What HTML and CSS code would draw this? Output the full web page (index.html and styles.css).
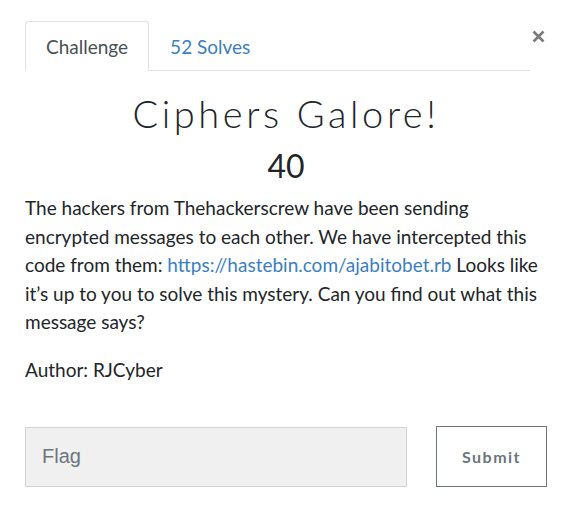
FILE: index.html
```html
<!DOCTYPE html>
<html>
<head>
<meta charset="utf-8">
<link rel="stylesheet" href="styles.css">
</head>
<body>
<div class="modal">
  <div class="header">
    <nav class="tabs">
      <a class="tab active">Challenge</a>
      <a class="tab">52 Solves</a>
    </nav>
    <button class="close" aria-label="Close">
      <svg width="13" height="13" viewBox="0 0 13 13"><path d="M1.5 1.5L11.5 11.5M11.5 1.5L1.5 11.5" stroke="#7a7a7a" stroke-width="2.6" stroke-linecap="butt"/></svg>
    </button>
  </div>
  <h2 class="title">Ciphers Galore!</h2>
  <h3 class="value">40</h3>
  <p class="desc">The hackers from Thehackerscrew have been sending encrypted messages to each other. We have intercepted this code from them: <a href="#">https://hastebin.com/ajabitobet.rb</a> Looks like it’s up to you to solve this mystery. Can you find out what this message says?</p>
  <p class="author">Author: RJCyber</p>
  <form class="submit-row">
    <input class="flag" type="text" placeholder="Flag">
    <button class="submit" type="button">Submit</button>
  </form>
</div>
</body>
</html>
```

FILE: styles.css
```css
html, body {
  margin: 0;
  padding: 0;
  background: #fff;
}
body {
  font-family: "Lato", "Liberation Sans", sans-serif;
  color: #212529;
}
.modal {
  padding: 21px 23px 0 25px;
}
.header {
  display: flex;
  align-items: flex-start;
}
.tabs {
  display: flex;
  flex: 1;
  margin-right: 2px;
  border-bottom: 1px solid #dee2e6;
}
.tab {
  display: flex;
  align-items: center;
  height: 48px;
  padding: 0 20px;
  border: 1px solid transparent;
  border-top-left-radius: 4px;
  border-top-right-radius: 4px;
  margin-bottom: -1px;
  font-size: 19px;
  color: #3a7fc1;
}
.tab.active {
  color: #495057;
  border-color: #dee2e6 #dee2e6 #fff;
  background: #fff;
}
.close {
  margin: 9px 2px 0 0;
  padding: 0;
  border: 0;
  background: none;
  width: 13px;
  height: 13px;
  display: flex;
}
.title {
  margin: 19px 0 0;
  text-align: center;
  font-size: 38px;
  font-weight: 300;
  letter-spacing: 3.6px;
  line-height: 46px;
}
.value {
  margin: 10px 0 0;
  text-align: center;
  font-size: 32px;
  font-weight: 400;
  line-height: 40px;
}
.desc {
  margin: 8px 0 0;
  font-size: 19px;
  line-height: 28.5px;
}
.desc a {
  color: #3a7fc1;
  text-decoration: none;
}
.author {
  margin: 19.5px 0 0;
  font-size: 19px;
  line-height: 28.5px;
}
.submit-row {
  display: flex;
  align-items: flex-start;
  gap: 29px;
  margin-top: 41px;
}
.flag {
  flex: 0 0 382px;
  box-sizing: border-box;
  height: 60px;
  margin-top: 1px;
  border: 1px solid #ced4da;
  background: #f0f0f0;
  padding: 0 16px;
  font-family: "Liberation Sans", sans-serif;
  font-size: 20px;
  color: #495057;
}
.flag::placeholder {
  color: #6c757d;
}
.submit {
  flex: 1;
  box-sizing: border-box;
  height: 61px;
  border: 1px solid #6c757d;
  background: #fff;
  font-family: "Lato", sans-serif;
  font-weight: 700;
  font-size: 16px;
  letter-spacing: 1.5px;
  color: #6c757d;
}
```
